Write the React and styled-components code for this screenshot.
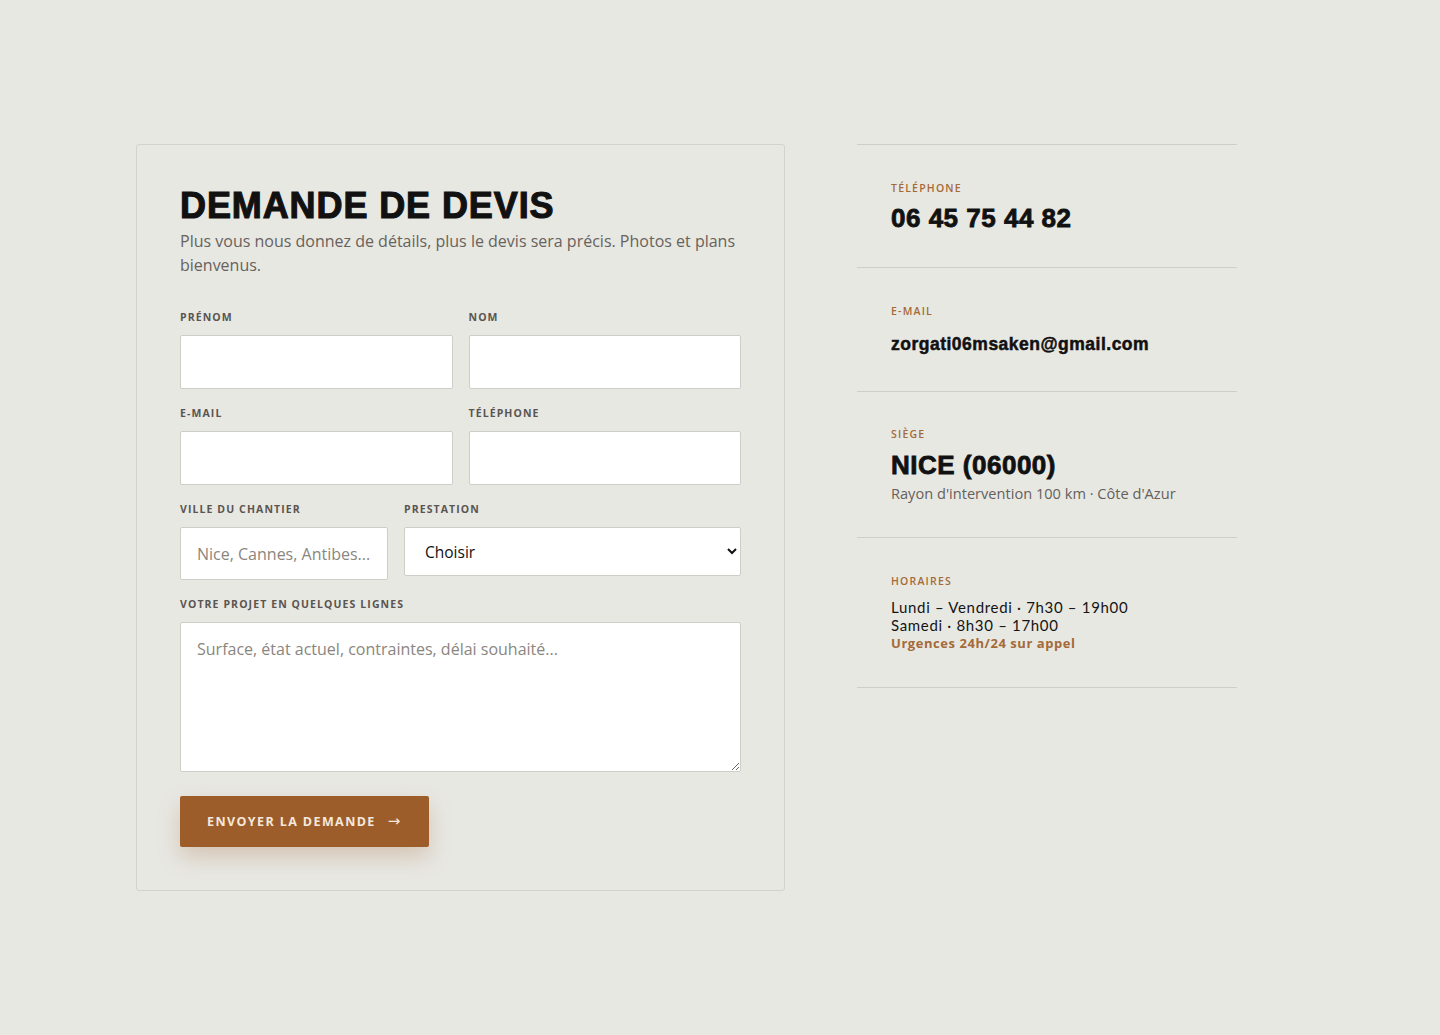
import styled, { createGlobalStyle } from "styled-components";

const GlobalStyle = createGlobalStyle`
  * { box-sizing: border-box; }
  body {
    margin: 0;
    background: #e8e8e3;
    font-family: "Open Sans", "Liberation Sans", sans-serif;
    color: #141414;
  }
`;

const Page = styled.div`
  padding: 144px 136px;
  display: grid;
  grid-template-columns: 649px 380px;
  column-gap: 72px;
  align-items: start;
`;

const Card = styled.form`
  border: 1px solid #d3d2cd;
  border-radius: 3px;
  padding: 43px;
`;

const Title = styled.h2`
  margin: 0;
  font-family: "Liberation Sans", Arial, sans-serif;
  font-weight: 700;
  font-size: 36px;
  line-height: 36px;
  letter-spacing: 0.9px;
  color: #111;
  -webkit-text-stroke: 1.1px #111;
  text-transform: uppercase;
`;

const Intro = styled.p`
  margin: 5px 0 0;
  font-size: 16px;
  line-height: 24px;
  color: #67625c;
`;

const Fields = styled.div`
  margin-top: 32px;
  display: flex;
  flex-direction: column;
  gap: 16px;
`;

const Row = styled.div`
  display: grid;
  grid-template-columns: ${(p) => p.$cols || "1fr 1fr"};
  gap: 16px;
  align-items: start;
`;

const Field = styled.label`
  display: flex;
  flex-direction: column;
`;

const Label = styled.span`
  font-size: 10.5px;
  line-height: 16px;
  font-weight: 700;
  letter-spacing: 1.1px;
  text-transform: uppercase;
  color: #5a5550;
  margin-bottom: 10px;
`;

const Input = styled.input`
  height: ${(p) => p.$h || 54}px;
  width: 100%;
  background: #fff;
  border: 1px solid #cfcdc8;
  border-radius: 2px;
  padding: 0 16px;
  font-family: inherit;
  font-size: 16px;
  color: #111;
  &::placeholder { color: #8a8680; }
`;

const Select = styled.select`
  height: 49px;
  width: 100%;
  background: #fff;
  border: 1px solid #cfcdc8;
  border-radius: 2px;
  padding: 0 12px 0 16px;
  font-family: inherit;
  font-size: 15.5px;
  color: #111;
`;

const TextArea = styled.textarea`
  height: 150px;
  width: 100%;
  background: #fff;
  border: 1px solid #cfcdc8;
  border-radius: 2px;
  padding: 15px 16px;
  font-family: inherit;
  font-size: 16px;
  line-height: 22px;
  color: #111;
  resize: vertical;
  display: block;
  &::placeholder { color: #8a8680; }
`;

const Submit = styled.button`
  margin-top: 24px;
  align-self: flex-start;
  height: 51px;
  padding: 0 29px 0 27px;
  background: #9d5d2a;
  color: #f4e8dc;
  border: none;
  border-radius: 2px;
  font-family: inherit;
  font-size: 12.5px;
  font-weight: 700;
  letter-spacing: 1.4px;
  text-transform: uppercase;
  box-shadow: 0 10px 22px rgba(157, 93, 42, 0.25);
  display: flex;
  align-items: center;
  gap: 12px;
  cursor: pointer;
`;

const Arrow = styled.span`
  font-family: "DejaVu Sans", sans-serif;
  font-size: 15px;
  line-height: 1;
  letter-spacing: 0;
  font-weight: 400;
`;

const Aside = styled.aside`
  border-top: 1px solid #d0cec9;
`;

const Info = styled.div`
  border-bottom: 1px solid #d0cec9;
  padding: ${(p) => p.$pad || "35px 34px 34px"};
`;

const InfoLabel = styled.div`
  font-size: 10.5px;
  line-height: 16px;
  font-weight: 600;
  letter-spacing: 1.2px;
  text-transform: uppercase;
  color: #a46a38;
`;

const Big = styled.div`
  margin-top: ${(p) => p.$mt || 7}px;
  font-family: "Liberation Sans", Arial, sans-serif;
  font-weight: 700;
  font-size: ${(p) => p.$size || 26}px;
  line-height: ${(p) => p.$lh || 30}px;
  letter-spacing: 0.5px;
  -webkit-text-stroke: ${(p) => (p.$size && p.$size < 20 ? 0.5 : 0.8)}px #111;
  color: #111;
`;

const Sub = styled.div`
  margin-top: 3px;
  font-size: 14.6px;
  line-height: 20px;
  color: #65605a;
`;

const Hours = styled.div`
  margin-top: 9px;
  display: flex;
  flex-direction: column;
`;

const HoursLine = styled.div`
  font-family: Lato, "Open Sans", sans-serif;
  font-size: 15px;
  line-height: 18px;
  letter-spacing: 0.68px;
  color: #141414;
`;

const Urgent = styled.div`
  font-size: 13px;
  line-height: 18px;
  font-weight: 700;
  letter-spacing: 0.55px;
  color: #a46a38;
`;

export default function App() {
  return (
    <>
      <GlobalStyle />
      <Page>
        <Card onSubmit={(e) => e.preventDefault()}>
          <Title>Demande de devis</Title>
          <Intro>
            Plus vous nous donnez de détails, plus le devis sera précis. Photos et plans
            bienvenus.
          </Intro>
          <Fields>
            <Row>
              <Field>
                <Label>Prénom</Label>
                <Input type="text" />
              </Field>
              <Field>
                <Label>Nom</Label>
                <Input type="text" />
              </Field>
            </Row>
            <Row>
              <Field>
                <Label>E-mail</Label>
                <Input type="email" />
              </Field>
              <Field>
                <Label>Téléphone</Label>
                <Input type="tel" />
              </Field>
            </Row>
            <Row $cols="208px 1fr">
              <Field>
                <Label>Ville du chantier</Label>
                <Input type="text" $h={53} placeholder="Nice, Cannes, Antibes..." />
              </Field>
              <Field>
                <Label>Prestation</Label>
                <Select defaultValue="">
                  <option value="">Choisir</option>
                  <option>Rénovation</option>
                  <option>Maçonnerie</option>
                </Select>
              </Field>
            </Row>
            <Field>
              <Label>Votre projet en quelques lignes</Label>
              <TextArea placeholder="Surface, état actuel, contraintes, délai souhaité..." />
            </Field>
          </Fields>
          <Submit type="submit">
            Envoyer la demande <Arrow>→</Arrow>
          </Submit>
        </Card>

        <Aside>
          <Info>
            <InfoLabel>Téléphone</InfoLabel>
            <Big>06 45 75 44 82</Big>
          </Info>
          <Info>
            <InfoLabel>E-mail</InfoLabel>
            <Big $size={17.5} $lh={26} $mt={12}>zorgati06msaken@gmail.com</Big>
          </Info>
          <Info $pad="34px 34px 34px">
            <InfoLabel>Siège</InfoLabel>
            <Big $mt={8}>NICE (06000)</Big>
            <Sub>Rayon d'intervention 100 km · Côte d'Azur</Sub>
          </Info>
          <Info $pad="35px 34px 35px">
            <InfoLabel>Horaires</InfoLabel>
            <Hours>
              <HoursLine>Lundi – Vendredi · 7h30 – 19h00</HoursLine>
              <HoursLine>Samedi · 8h30 – 17h00</HoursLine>
            </Hours>
            <Urgent>Urgences 24h/24 sur appel</Urgent>
          </Info>
        </Aside>
      </Page>
    </>
  );
}
